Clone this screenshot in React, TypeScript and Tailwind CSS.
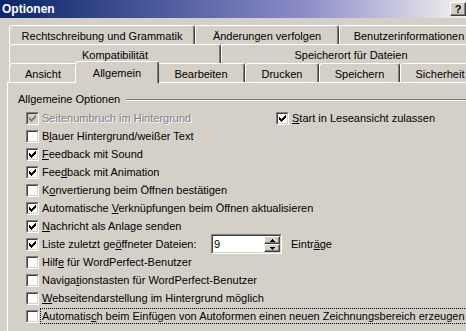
import React from "react";

const face = "font-['Liberation_Sans',Arial,sans-serif] text-[11px] leading-[13px]";

// classic 7x7 check glyph, column by column
const checkCols = [2, 3, 4, 3, 2, 1, 0];

function CheckBox({ checked, disabled }: { checked?: boolean; disabled?: boolean }) {
  return (
    <span className="flex h-[13px] w-[13px] shrink-0 border border-t-[#808080] border-l-[#808080] border-b-white border-r-white">
      <span
        className={`flex flex-1 items-center justify-center border border-t-[#404040] border-l-[#404040] border-b-[#d4d0c8] border-r-[#d4d0c8] ${
          disabled ? "bg-[#d4d0c8]" : "bg-white"
        }`}
      >
        {checked && (
          <svg width="7" height="7" viewBox="0 0 7 7" shapeRendering="crispEdges">
            {checkCols.map((y, x) => (
              <rect key={x} x={x} y={y} width="1" height="3" fill={disabled ? "#808080" : "#000"} />
            ))}
          </svg>
        )}
      </span>
    </span>
  );
}

type Row = {
  pre: string;
  u: string;
  post: string;
  checked?: boolean;
  disabled?: boolean;
  focus?: boolean;
};

function Label({ row }: { row: Row }) {
  return (
    <span
      className={`ml-[1px] block h-[16px] whitespace-pre border px-[1px] leading-[14px] ${
        row.focus ? "border-dotted border-black" : "border-transparent"
      } ${row.disabled ? "text-[#808080] [text-shadow:1px_1px_0_#fff]" : "text-black"}`}
    >
      {row.pre}
      {row.u && <u className="underline-offset-[1px]">{row.u}</u>}
      {row.post}
    </span>
  );
}

function Option({ row }: { row: Row }) {
  return (
    <div className="flex items-center">
      <CheckBox checked={row.checked} disabled={row.disabled} />
      <Label row={row} />
    </div>
  );
}

const topRows: Row[] = [
  { pre: "B", u: "l", post: "auer Hintergrund/weißer Text" },
  { pre: "", u: "F", post: "eedback mit Sound", checked: true },
  { pre: "Fee", u: "d", post: "back mit Animation", checked: true },
  { pre: "K", u: "o", post: "nvertierung beim Öffnen bestätigen" },
  { pre: "Automatische ", u: "V", post: "erknüpfungen beim Öffnen aktualisieren", checked: true },
  { pre: "", u: "N", post: "achricht als Anlage senden", checked: true },
];

const bottomRows: Row[] = [
  { pre: "Hilf", u: "e", post: " für WordPerfect-Benutzer" },
  { pre: "Naviga", u: "t", post: "ionstasten für WordPerfect-Benutzer" },
  { pre: "", u: "W", post: "ebseitendarstellung im Hintergrund möglich" },
  {
    pre: "Automatis",
    u: "c",
    post: "h beim Einfügen von Autoformen einen neuen Zeichnungsbereich erzeugen",
    focus: true,
  },
];

function Tab({ label, w, selected }: { label: string; w: string; selected?: boolean }) {
  return (
    <div
      className={`${w} shrink-0 rounded-t-[3px] border-t border-l border-r border-t-white border-l-white border-r-[#404040] bg-[#d4d0c8] text-center shadow-[inset_-1px_0_#808080] whitespace-nowrap ${
        selected ? "relative z-10 -mx-[2px] -mt-[2px] h-[22px] pt-[5px]" : "h-[19px] pt-[4px]"
      }`}
    >
      {label}
    </div>
  );
}

function SpinBox() {
  return (
    <div className="flex h-[20px] w-[71px] shrink-0 border border-t-[#808080] border-l-[#808080] border-b-white border-r-white">
      <div className="flex flex-1 border border-t-[#404040] border-l-[#404040] border-b-[#d4d0c8] border-r-[#d4d0c8] bg-white">
        <span className="flex-1 pl-[1px] leading-[16px]">9</span>
        <div className="flex w-[16px] flex-col">
          {["up", "down"].map((d) => (
            <div
              key={d}
              className="flex flex-1 items-center justify-center border border-t-white border-l-white border-b-[#404040] border-r-[#404040] bg-[#d4d0c8] shadow-[inset_-1px_-1px_#808080]"
            >
              <svg width="5" height="3" viewBox="0 0 5 3" shapeRendering="crispEdges">
                <path d={d === "up" ? "M2 0h1v1h1v1h1v1H0V2h1V1h1z" : "M0 0h5v1H4v1H3v1H2V2H1V1H0z"} fill="#000" />
              </svg>
            </div>
          ))}
        </div>
      </div>
    </div>
  );
}

export default function App() {
  return (
    <div className={`h-[331px] w-[466px] overflow-hidden bg-[#d4d0c8] text-black ${face}`}>
      {/* title bar */}
      <div className="flex h-[18px] items-center justify-between bg-linear-to-r from-[#0a246a] via-[#8c8cc8] via-65% to-[#f4f2ec] pl-[2px] pr-0">
        <span className="text-[12px] font-bold text-white">Optionen</span>
        <div className="flex h-[14px] w-[16px] items-center justify-center border border-t-white border-l-white border-b-[#404040] border-r-[#404040] bg-[#d4d0c8] font-bold shadow-[inset_-1px_-1px_#808080]">
          ?
        </div>
      </div>

      {/* tab rows */}
      <div className="mt-[7px]">
        <div className="ml-[9px] flex h-[19px]">
          <Tab label="Rechtschreibung und Grammatik" w="w-[186px]" />
          <Tab label="Änderungen verfolgen" w="w-[144px]" />
          <Tab label="Benutzerinformationen" w="w-[140px]" />
        </div>
        <div className="ml-[9px] flex h-[19px]">
          <Tab label="Kompatibilität" w="w-[212px]" />
          <Tab label="Speicherort für Dateien" w="w-[260px]" />
        </div>
        <div className="ml-[9px] flex h-[19px]">
          <Tab label="Ansicht" w="w-[68px]" />
          <Tab label="Allgemein" w="w-[84px]" selected />
          <Tab label="Bearbeiten" w="w-[88px]" />
          <Tab label="Drucken" w="w-[74px]" />
          <Tab label="Speichern" w="w-[81px]" />
          <Tab label="Sicherheit" w="w-[80px]" />
        </div>
      </div>

      {/* panel */}
      <div className="ml-[7px] h-[260px] border-t border-l border-white pl-[10px] pt-[10px]">
        <div className="flex items-center">
          <span className="whitespace-nowrap">Allgemeine Optionen</span>
          <div className="ml-[6px] h-[2px] flex-1 border-t border-b border-t-[#808080] border-b-white" />
        </div>

        <div className="mt-[3px] pl-[8px]">
          <div className="flex h-[18px] items-center">
            <div className="w-[250px]">
              <Option row={{ pre: "Seitenumbruch im Hintergrund", u: "", post: "", checked: true, disabled: true }} />
            </div>
            <Option row={{ pre: "", u: "S", post: "tart in Leseansicht zulassen", checked: true }} />
          </div>

          {topRows.map((r) => (
            <div key={r.post} className="flex h-[18px] items-center">
              <Option row={r} />
            </div>
          ))}

          <div className="flex h-[18px] items-center">
            <div className="w-[185px]">
              <Option row={{ pre: "Liste zuletzt ge", u: "ö", post: "ffneter Dateien:", checked: true }} />
            </div>
            <SpinBox />
            <span className="ml-[9px]">
              Eintr<u>ä</u>ge
            </span>
          </div>

          {bottomRows.map((r) => (
            <div key={r.post} className="flex h-[18px] items-center">
              <Option row={r} />
            </div>
          ))}
        </div>
      </div>
    </div>
  );
}
